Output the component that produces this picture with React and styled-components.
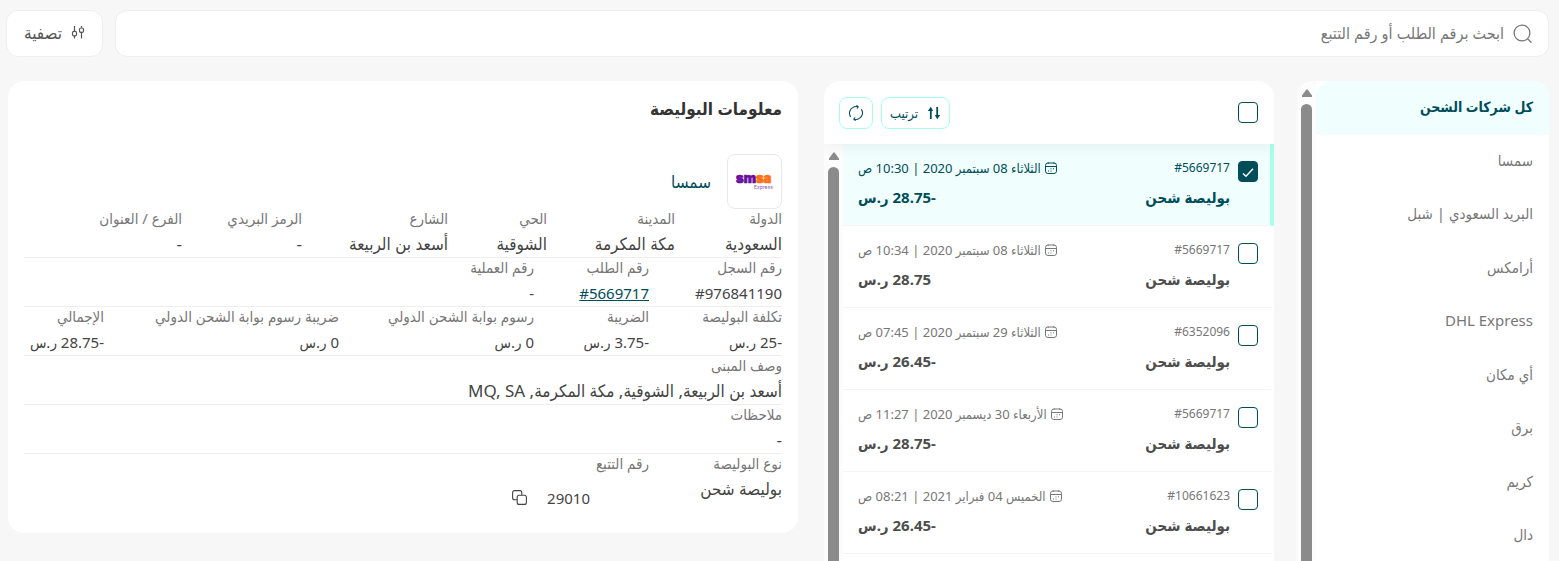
import React, { useState } from 'react';
import styled, { createGlobalStyle, css } from 'styled-components';

const GlobalStyle = createGlobalStyle`
  * {
    box-sizing: border-box;
  }

  body {
    margin: 0;
    background: #f7f7f7;
    color: #444;
    font-family: 'Noto Sans', 'DejaVu Sans Condensed', 'DejaVu Sans', sans-serif;
    font-size: 15px;
  }

  button,
  input {
    font: inherit;
  }
`;

const Page = styled.div`
  display: flex;
  flex-direction: column;
  gap: 24px;
  height: 100vh;
  padding-top: 10px;
  overflow: hidden;
`;

const TopBar = styled.header`
  display: flex;
  gap: 12px;
  padding: 0 10px 0 6px;
`;

const SearchBox = styled.label`
  display: flex;
  flex: 1;
  align-items: center;
  gap: 9px;
  height: 47px;
  padding: 0 16px;
  background: #fff;
  border: 1px solid #eee;
  border-radius: 12px;
  color: #777;
  font-size: 16px;
`;

const SearchInput = styled.input`
  flex: 1;
  min-width: 0;
  padding: 0 0 2px;
  border: none;
  outline: none;
  background: none;
  color: #444;

  &::placeholder {
    color: #777;
    opacity: 1;
  }
`;

const FilterButton = styled.button`
  display: flex;
  align-items: center;
  justify-content: center;
  gap: 9px;
  width: 97px;
  height: 47px;
  padding: 0 0 3px;
  background: #fff;
  border: 1px solid #eee;
  border-radius: 12px;
  color: #555;
  font-size: 17px;
  cursor: pointer;
`;

const Columns = styled.main`
  display: grid;
  flex: 1;
  grid-template-columns: 252px 450px minmax(0, 1fr);
  grid-template-rows: minmax(0, 1fr);
  gap: 23px;
  min-height: 0;
  padding: 0 10px 0 8px;
`;

const Panel = styled.section`
  display: flex;
  flex-direction: column;
  overflow: hidden;
  background: #fff;
  border-radius: 16px 16px 0 0;
`;

const ScrollArea = styled.div`
  display: flex;
  flex: 1;
  min-height: 0;
`;

const ScrollContent = styled.ul`
  flex: 1;
  min-width: 0;
  margin: 0;
  padding: 0;
  list-style: none;
  overflow-y: auto;
  scrollbar-width: none;
`;

const Track = styled.div`
  display: flex;
  flex-direction: column;
  align-items: center;
  gap: 7px;
  width: 19px;
  padding-top: 8px;
  background: #fcfcfc;
`;

const Thumb = styled.div`
  flex: 1;
  width: 11px;
  background: #8b8b8b;
  border-radius: 6px 6px 0 0;
`;

const CompanyItem = styled.li`
  height: 53px;

  &:nth-child(odd) {
    height: 54px;
  }
`;

const CompanyButton = styled.button`
  display: block;
  width: 100%;
  height: 100%;
  padding: 0 16px 4px;
  border: none;
  background: none;
  color: #777;
  text-align: start;
  cursor: pointer;

  ${({ $active }) =>
    $active &&
    css`
      background: #f0fffd;
      border-radius: 16px 16px 0 0;
      color: #004d5a;
      font-size: 14px;
      font-weight: 600;
    `}
`;

const ListHeader = styled.div`
  display: flex;
  align-items: center;
  justify-content: space-between;
  height: 63px;
  padding: 0 16px 0 15px;
  z-index: 1;
  box-shadow: 0 4px 12px rgba(0, 0, 0, 0.05);
`;

const Actions = styled.div`
  display: flex;
  gap: 8px;
`;

const ActionButton = styled.button`
  display: flex;
  align-items: center;
  justify-content: center;
  gap: 9px;
  height: 32px;
  padding: 0 8px;
  background: #fff;
  border: 1px solid #a5ffea;
  border-radius: 8px;
  color: #004d5a;
  font-size: 13px;
  cursor: pointer;
`;

const Checkbox = styled.input`
  appearance: none;
  flex: none;
  width: 20px;
  height: 21px;
  margin: 0;
  background: #fff center / 12px no-repeat;
  border: 1px solid #004d5a;
  border-radius: 4px;
  cursor: pointer;

  &:checked {
    background-color: #004d5a;
    background-image: url("data:image/svg+xml,%3Csvg xmlns='http://www.w3.org/2000/svg' viewBox='0 0 12 12' fill='none' stroke='white' stroke-width='1.5'%3E%3Cpath d='M1 7.5 4 10.2 11 2.8'/%3E%3C/svg%3E");
  }
`;

const Shipment = styled.li`
  display: flex;
  gap: 8px;
  height: 82px;
  padding: 17px 12px 0 15px;
  border-bottom: 1px solid #f5f5f5;
  border-right: 4px solid ${({ $selected }) => ($selected ? '#a5ffea' : 'transparent')};
  background: ${({ $selected }) => ($selected ? '#f0fffd' : '#fff')};
  color: ${({ $selected }) => ($selected ? '#004d5a' : '#4d4d4d')};
`;

const ShipmentBody = styled.div`
  display: grid;
  flex: 1;
  grid-template-columns: 1fr 206px;
  grid-template-rows: 14px 28px;
  row-gap: 8px;
  align-items: center;
`;

const Meta = styled.span`
  display: flex;
  align-items: center;
  gap: 4px;
  color: ${({ $selected }) => ($selected ? '#004d5a' : '#777')};
  font-size: 12px;
  line-height: 14px;
  white-space: nowrap;
`;

const DateMeta = styled(Meta)`
  justify-content: flex-end;
  font-size: 13px;
`;

const Strong = styled.strong`
  font-size: 15px;
  font-weight: 700;
  white-space: nowrap;
`;

const Amount = styled(Strong)`
  text-align: end;
`;

const InfoCard = styled.section`
  align-self: start;
  margin-inline-start: 3px;
  padding: 16px 16px 14px;
  background: #fff;
  border-radius: 16px;
`;

const InfoTitle = styled.h1`
  margin: 0 0 33px;
  color: #333;
  font-size: 17px;
  font-weight: 600;
  line-height: 24px;
`;

const Carrier = styled.div`
  display: flex;
  align-items: center;
  gap: 16px;
  color: #004d5a;
  font-size: 17px;
`;

const LogoBox = styled.div`
  display: flex;
  align-items: center;
  justify-content: center;
  width: 55px;
  height: 55px;
  border: 1px solid #e8e8e8;
  border-radius: 8px;
`;

const FieldRow = styled.dl`
  display: grid;
  grid-template-columns: ${({ $columns }) => $columns.map((n) => `minmax(0, ${n}fr)`).join(' ')};
  margin: 0;
  border-bottom: 1px solid #eee;
  white-space: nowrap;

  &:last-child {
    border-bottom: none;
  }
`;

const FieldLabel = styled.dt`
  color: #777;
  font-size: 15px;
  line-height: 18px;
`;

const FieldValue = styled.dd`
  margin: 4px 0 0;
  color: #444;
  font-size: ${({ $numeric }) => ($numeric ? 15 : 17)}px;
  line-height: 26px;
`;

const OrderLink = styled.a`
  color: #004d5a;
`;

const Tracking = styled.div`
  display: flex;
  align-items: center;
  gap: 20px;
  height: 43px;
  padding-inline-start: 59px;
`;

const CopyButton = styled.button`
  display: flex;
  padding: 0;
  border: none;
  background: none;
  color: #444;
  cursor: pointer;
`;

const SearchIcon = () => (
  <svg width="19" height="20" viewBox="0 0 19 20" fill="none" stroke="currentColor" strokeWidth="1.3" strokeLinecap="round">
    <circle cx="9" cy="9" r="7.9" />
    <path d="M14.7 14.9 18 18.3" />
  </svg>
);

const FilterIcon = () => (
  <svg width="14" height="14" viewBox="0 0 14 14" fill="none" stroke="currentColor" strokeWidth="1.2">
    <path d="M3.5 1v5M3.5 11v2.5M10.5 1v1.5M10.5 8v5.5" />
    <rect x="1.5" y="6.4" width="4" height="4.4" rx="1.4" />
    <rect x="8.5" y="3" width="4" height="4.4" rx="1.4" />
  </svg>
);

const SortIcon = () => (
  <svg width="14" height="14" viewBox="0 0 14 14" fill="none" stroke="currentColor" strokeWidth="1.8">
    <path d="M3.8 13V3M10.2 1v10" />
    <path d="M.8 5 3.8.8 6.2 5zM7.8 9l2.4 4.2L13.2 9z" fill="currentColor" stroke="none" />
  </svg>
);

const RefreshIcon = () => (
  <svg width="16" height="16" viewBox="0 0 16 16" fill="none" stroke="currentColor" strokeWidth="1.1" strokeLinecap="round">
    <path d="M2.4 11.4A6.4 6.4 0 0 1 4.6 2.6a6.4 6.4 0 0 1 5.6-.8M8.8.6l1.4 1.2-1 1.4" />
    <path d="M13.6 4.6a6.4 6.4 0 0 1-2.2 8.8 6.4 6.4 0 0 1-5.6.8M7.2 15.4l-1.4-1.2 1-1.4" />
  </svg>
);

const CalendarIcon = () => (
  <svg width="12" height="12" viewBox="0 0 12 12" fill="none" stroke="currentColor">
    <rect x=".5" y="1" width="11" height="10.5" rx="2.4" />
    <path d="M.5 4.5h11M3.2.4v1.4M8.8.4v1.4" />
    <path d="M5.5 6.8h1M8 6.8h1M3 9h1M5.5 9h1" />
  </svg>
);

const CopyIcon = () => (
  <svg width="15" height="15" viewBox="0 0 15 15" fill="none" stroke="currentColor" strokeWidth="1.1">
    <rect x="5.2" y="5.2" width="9.2" height="9.2" rx="2" />
    <path d="M5.2 9.8H2.6a2 2 0 0 1-2-2V2.6a2 2 0 0 1 2-2h5.2a2 2 0 0 1 2 2v2.6" />
  </svg>
);

const SmsaLogo = () => (
  <svg width="46" height="34" viewBox="0 0 46 34" direction="ltr" fontFamily="Inter, sans-serif">
    <text x="4" y="18" fontSize="13" fontWeight="900" fill="#6a0f9c" stroke="#6a0f9c" strokeWidth=".7">
      sm
      <tspan fill="#ff6f12" stroke="#ff6f12">
        sa
      </tspan>
    </text>
    <text x="22" y="24" fontSize="5" fill="#8b4fb0">
      Express
    </text>
  </svg>
);

const Scrollbar = () => (
  <Track aria-hidden="true">
    <svg width="10" height="8" viewBox="0 0 10 8" fill="#8b8b8b">
      <path d="M4.2.7a1 1 0 0 1 1.6 0L9.6 6a1 1 0 0 1-.8 2H1.2a1 1 0 0 1-.8-2z" />
    </svg>
    <Thumb />
  </Track>
);

const companies = [
  'كل شركات الشحن',
  'سمسا',
  'البريد السعودي | شبل',
  'أرامكس',
  'DHL Express',
  'أي مكان',
  'برق',
  'كريم',
  'دال',
];

const shipments = [
  { order: '#5669717', date: 'الثلاثاء 08 سبتمبر 2020 | 10:30 ص', amount: '-28.75' },
  { order: '#5669717', date: 'الثلاثاء 08 سبتمبر 2020 | 10:34 ص', amount: '28.75' },
  { order: '#6352096', date: 'الثلاثاء 29 سبتمبر 2020 | 07:45 ص', amount: '-26.45' },
  { order: '#5669717', date: 'الأربعاء 30 ديسمبر 2020 | 11:27 ص', amount: '-28.75' },
  { order: '#10661623', date: 'الخميس 04 فبراير 2021 | 08:21 ص', amount: '-26.45' },
];

const fieldRows = [
  {
    columns: [107, 128, 99, 146, 120, 158],
    fields: [
      ['الدولة', 'السعودية'],
      ['المدينة', 'مكة المكرمة'],
      ['الحي', 'الشوقية'],
      ['الشارع', 'أسعد بن الربيعة'],
      ['الرمز البريدي', '-'],
      ['الفرع / العنوان', '-'],
    ],
  },
  {
    columns: [133, 115, 510],
    numeric: true,
    fields: [
      ['رقم السجل', <bdi dir="ltr">#976841190</bdi>],
      ['رقم الطلب', <OrderLink href="#5669717" dir="ltr">#5669717</OrderLink>],
      ['رقم العملية', '-'],
    ],
  },
  {
    columns: [133, 115, 195, 235, 80],
    numeric: true,
    fields: [
      ['تكلفة البوليصة', '-25 ر.س'],
      ['الضريبة', '-3.75 ر.س'],
      ['رسوم بوابة الشحن الدولي', '0 ر.س'],
      ['ضريبة رسوم بوابة الشحن الدولي', '0 ر.س'],
      ['الإجمالي', '-28.75 ر.س'],
    ],
  },
  { columns: [1], fields: [['وصف المبنى', 'أسعد بن الربيعة, الشوقية, مكة المكرمة, MQ, SA']] },
  { columns: [1], fields: [['ملاحظات', '-']] },
];

export default function App() {
  const [company, setCompany] = useState(0);
  const [selected, setSelected] = useState([0]);

  const toggle = (index) => {
    setSelected(selected.includes(index) ? selected.filter((i) => i !== index) : [...selected, index]);
  };

  const toggleAll = () => {
    setSelected(selected.length === shipments.length ? [] : shipments.map((_, i) => i));
  };

  return (
    <>
      <GlobalStyle />
      <Page dir="rtl" lang="ar">
        <TopBar>
          <SearchBox>
            <SearchIcon />
            <SearchInput type="text" placeholder="ابحث برقم الطلب أو رقم التتبع" />
          </SearchBox>
          <FilterButton type="button">
            <FilterIcon />
            تصفية
          </FilterButton>
        </TopBar>
        <Columns>
          <Panel>
            <ScrollArea>
              <ScrollContent>
                {companies.map((name, i) => (
                  <CompanyItem key={name}>
                    <CompanyButton type="button" $active={i === company} onClick={() => setCompany(i)}>
                      {name}
                    </CompanyButton>
                  </CompanyItem>
                ))}
              </ScrollContent>
              <Scrollbar />
            </ScrollArea>
          </Panel>
          <Panel>
            <ListHeader>
              <Checkbox
                type="checkbox"
                aria-label="تحديد الكل"
                checked={selected.length === shipments.length}
                onChange={toggleAll}
              />
              <Actions>
                <ActionButton type="button">
                  <SortIcon />
                  ترتيب
                </ActionButton>
                <ActionButton type="button" aria-label="تحديث">
                  <RefreshIcon />
                </ActionButton>
              </Actions>
            </ListHeader>
            <ScrollArea>
              <ScrollContent>
                {shipments.map((item, i) => {
                  const isSelected = selected.includes(i);
                  return (
                    <Shipment key={i} $selected={isSelected}>
                      <Checkbox
                        type="checkbox"
                        aria-label={item.order}
                        checked={isSelected}
                        onChange={() => toggle(i)}
                      />
                      <ShipmentBody>
                        <Meta $selected={isSelected}>
                          <bdi dir="ltr">{item.order}</bdi>
                        </Meta>
                        <DateMeta $selected={isSelected}>
                          <CalendarIcon />
                          {item.date}
                        </DateMeta>
                        <Strong>بوليصة شحن</Strong>
                        <Amount>{item.amount} ر.س</Amount>
                      </ShipmentBody>
                    </Shipment>
                  );
                })}
              </ScrollContent>
              <Scrollbar />
            </ScrollArea>
          </Panel>
          <InfoCard>
            <InfoTitle>معلومات البوليصة</InfoTitle>
            <Carrier>
              <LogoBox>
                <SmsaLogo />
              </LogoBox>
              سمسا
            </Carrier>
            {fieldRows.map(({ columns, numeric, fields }, i) => (
              <FieldRow key={i} $columns={columns}>
                {fields.map(([label, value]) => (
                  <div key={label}>
                    <FieldLabel>{label}</FieldLabel>
                    <FieldValue $numeric={numeric}>{value}</FieldValue>
                  </div>
                ))}
              </FieldRow>
            ))}
            <FieldRow $columns={[133, 625]}>
              <div>
                <FieldLabel>نوع البوليصة</FieldLabel>
                <FieldValue>بوليصة شحن</FieldValue>
              </div>
              <div>
                <FieldLabel>رقم التتبع</FieldLabel>
                <FieldValue $numeric>
                  <Tracking>
                    29010
                    <CopyButton type="button" aria-label="نسخ">
                      <CopyIcon />
                    </CopyButton>
                  </Tracking>
                </FieldValue>
              </div>
            </FieldRow>
          </InfoCard>
        </Columns>
      </Page>
    </>
  );
}
